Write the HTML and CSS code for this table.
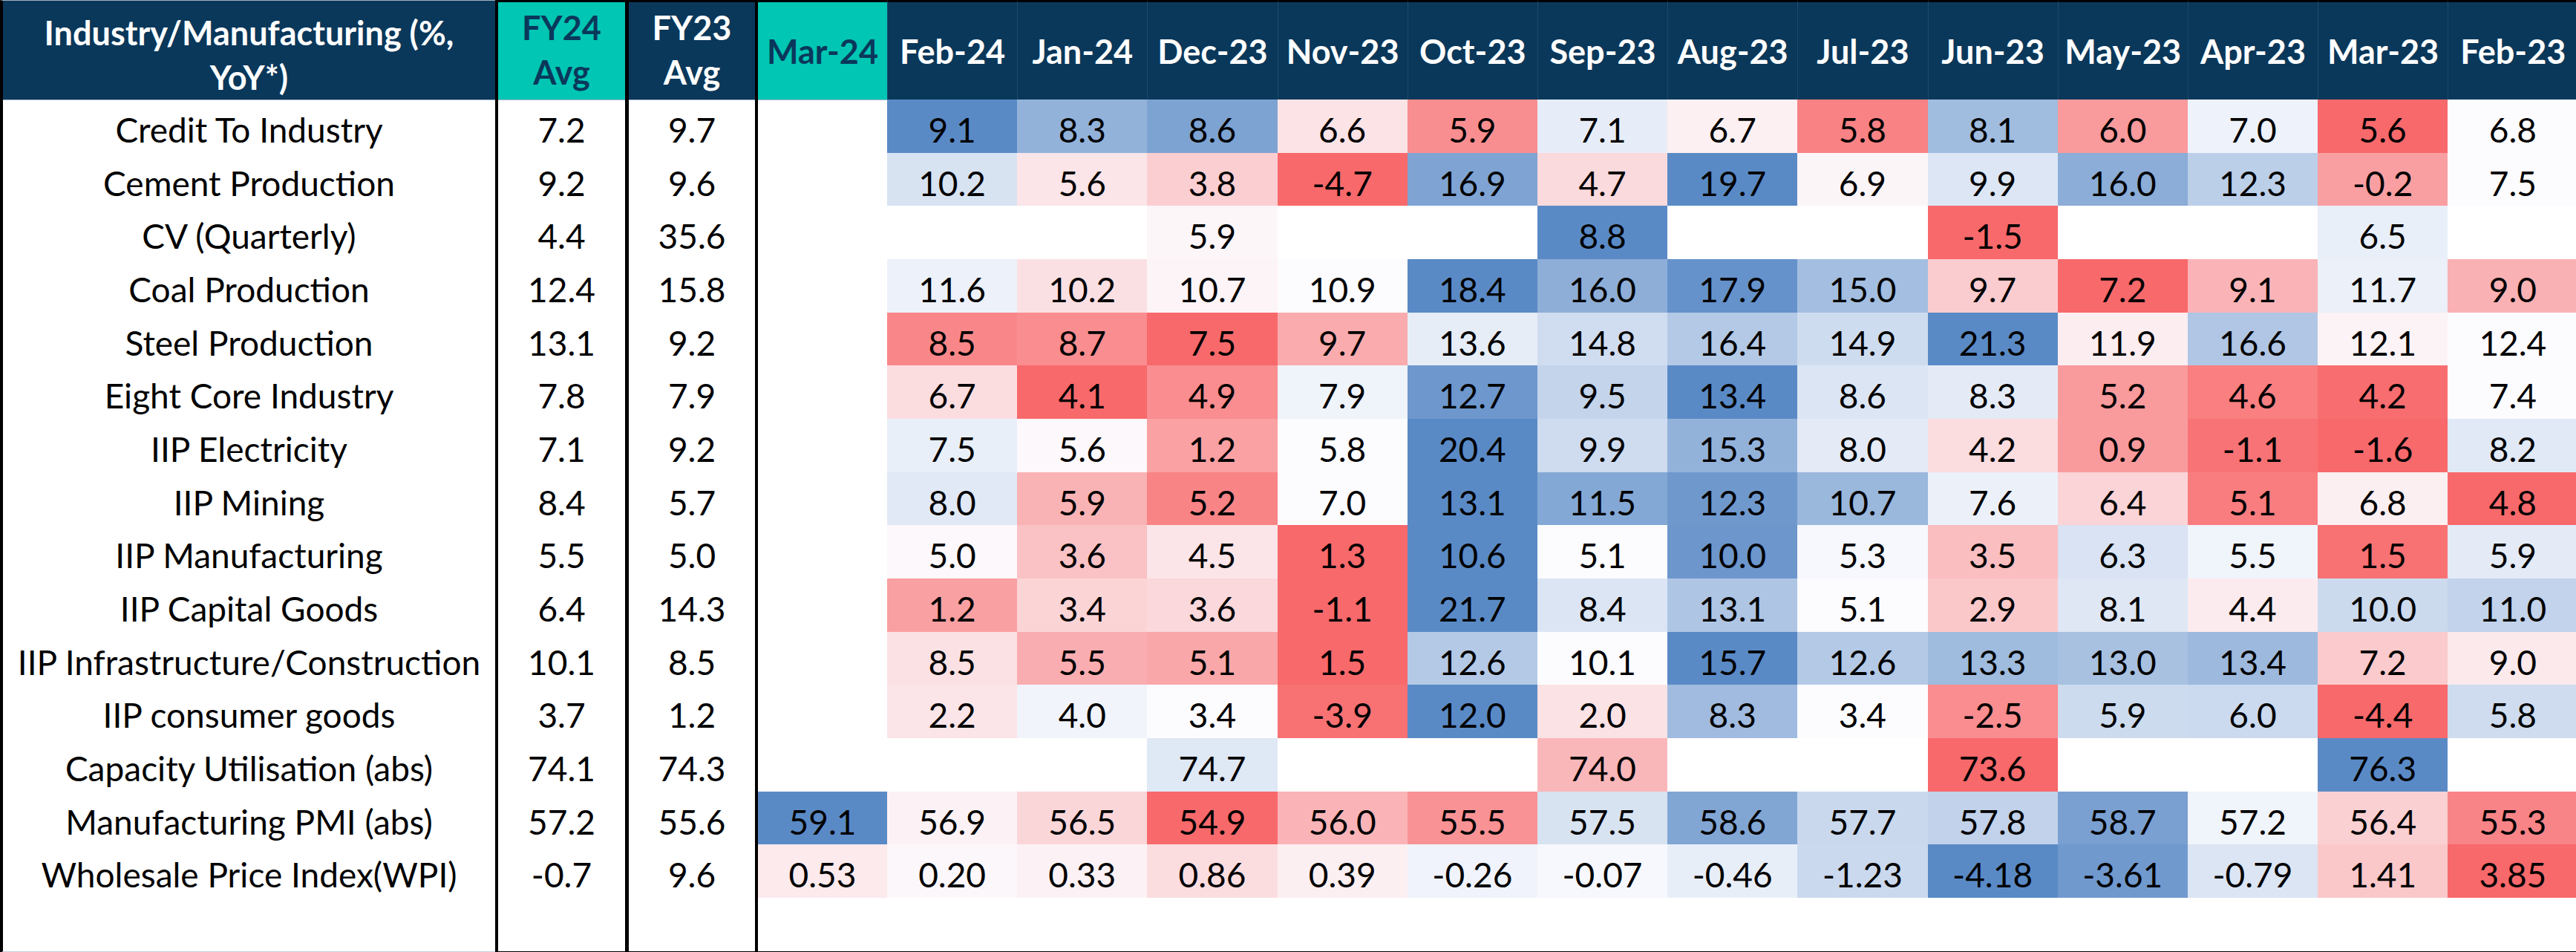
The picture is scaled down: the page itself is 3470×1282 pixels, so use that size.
FILE: index.html
```html
<!DOCTYPE html>
<html lang="en">
<head>
<meta charset="utf-8">
<title>Industry/Manufacturing heatmap</title>
<link rel="stylesheet" href="styles.css">
<script src="script.js" defer></script>
</head>
<body>
<div class="sheet">
  <div class="row head">
    <div class="cell c1 h-navy"><span class="h1text">Industry/Manufacturing (%,<br>YoY*)</span></div>
    <div class="cell fy24 h-teal">FY24<br>Avg</div>
    <div class="cell fy23 h-navy">FY23<br>Avg</div>
    <div class="cell m0 h-teal">Mar-24</div>
    <div class="cell m h-navy">Feb-24</div>
    <div class="cell m h-navy">Jan-24</div>
    <div class="cell m h-navy">Dec-23</div>
    <div class="cell m h-navy">Nov-23</div>
    <div class="cell m h-navy">Oct-23</div>
    <div class="cell m h-navy">Sep-23</div>
    <div class="cell m h-navy">Aug-23</div>
    <div class="cell m h-navy">Jul-23</div>
    <div class="cell m h-navy">Jun-23</div>
    <div class="cell m h-navy">May-23</div>
    <div class="cell m h-navy">Apr-23</div>
    <div class="cell m h-navy">Mar-23</div>
    <div class="cell m h-navy">Feb-23</div>
  </div>

  <div class="row data"><div class="cell c1">Credit To Industry</div><div class="cell fy24">7.2</div><div class="cell fy23">9.7</div><div class="cell m0 hv"></div><div class="cell m hv">9.1</div><div class="cell m hv">8.3</div><div class="cell m hv">8.6</div><div class="cell m hv">6.6</div><div class="cell m hv">5.9</div><div class="cell m hv">7.1</div><div class="cell m hv">6.7</div><div class="cell m hv">5.8</div><div class="cell m hv">8.1</div><div class="cell m hv">6.0</div><div class="cell m hv">7.0</div><div class="cell m hv">5.6</div><div class="cell m hv">6.8</div></div>

  <div class="row data"><div class="cell c1">Cement Production</div><div class="cell fy24">9.2</div><div class="cell fy23">9.6</div><div class="cell m0 hv"></div><div class="cell m hv">10.2</div><div class="cell m hv">5.6</div><div class="cell m hv">3.8</div><div class="cell m hv">-4.7</div><div class="cell m hv">16.9</div><div class="cell m hv">4.7</div><div class="cell m hv">19.7</div><div class="cell m hv">6.9</div><div class="cell m hv">9.9</div><div class="cell m hv">16.0</div><div class="cell m hv">12.3</div><div class="cell m hv">-0.2</div><div class="cell m hv">7.5</div></div>

  <div class="row data"><div class="cell c1">CV (Quarterly)</div><div class="cell fy24">4.4</div><div class="cell fy23">35.6</div><div class="cell m0 hv"></div><div class="cell m hv"></div><div class="cell m hv"></div><div class="cell m hv">5.9</div><div class="cell m hv"></div><div class="cell m hv"></div><div class="cell m hv">8.8</div><div class="cell m hv"></div><div class="cell m hv"></div><div class="cell m hv">-1.5</div><div class="cell m hv"></div><div class="cell m hv"></div><div class="cell m hv">6.5</div><div class="cell m hv"></div></div>

  <div class="row data"><div class="cell c1">Coal Production</div><div class="cell fy24">12.4</div><div class="cell fy23">15.8</div><div class="cell m0 hv"></div><div class="cell m hv">11.6</div><div class="cell m hv">10.2</div><div class="cell m hv">10.7</div><div class="cell m hv">10.9</div><div class="cell m hv">18.4</div><div class="cell m hv">16.0</div><div class="cell m hv">17.9</div><div class="cell m hv">15.0</div><div class="cell m hv">9.7</div><div class="cell m hv">7.2</div><div class="cell m hv">9.1</div><div class="cell m hv">11.7</div><div class="cell m hv">9.0</div></div>

  <div class="row data"><div class="cell c1">Steel Production</div><div class="cell fy24">13.1</div><div class="cell fy23">9.2</div><div class="cell m0 hv"></div><div class="cell m hv">8.5</div><div class="cell m hv">8.7</div><div class="cell m hv">7.5</div><div class="cell m hv">9.7</div><div class="cell m hv">13.6</div><div class="cell m hv">14.8</div><div class="cell m hv">16.4</div><div class="cell m hv">14.9</div><div class="cell m hv">21.3</div><div class="cell m hv">11.9</div><div class="cell m hv">16.6</div><div class="cell m hv">12.1</div><div class="cell m hv">12.4</div></div>

  <div class="row data"><div class="cell c1">Eight Core Industry</div><div class="cell fy24">7.8</div><div class="cell fy23">7.9</div><div class="cell m0 hv"></div><div class="cell m hv">6.7</div><div class="cell m hv">4.1</div><div class="cell m hv">4.9</div><div class="cell m hv">7.9</div><div class="cell m hv">12.7</div><div class="cell m hv">9.5</div><div class="cell m hv">13.4</div><div class="cell m hv">8.6</div><div class="cell m hv">8.3</div><div class="cell m hv">5.2</div><div class="cell m hv">4.6</div><div class="cell m hv">4.2</div><div class="cell m hv">7.4</div></div>

  <div class="row data"><div class="cell c1">IIP Electricity</div><div class="cell fy24">7.1</div><div class="cell fy23">9.2</div><div class="cell m0 hv"></div><div class="cell m hv">7.5</div><div class="cell m hv">5.6</div><div class="cell m hv">1.2</div><div class="cell m hv">5.8</div><div class="cell m hv">20.4</div><div class="cell m hv">9.9</div><div class="cell m hv">15.3</div><div class="cell m hv">8.0</div><div class="cell m hv">4.2</div><div class="cell m hv">0.9</div><div class="cell m hv">-1.1</div><div class="cell m hv">-1.6</div><div class="cell m hv">8.2</div></div>

  <div class="row data"><div class="cell c1">IIP Mining</div><div class="cell fy24">8.4</div><div class="cell fy23">5.7</div><div class="cell m0 hv"></div><div class="cell m hv">8.0</div><div class="cell m hv">5.9</div><div class="cell m hv">5.2</div><div class="cell m hv">7.0</div><div class="cell m hv">13.1</div><div class="cell m hv">11.5</div><div class="cell m hv">12.3</div><div class="cell m hv">10.7</div><div class="cell m hv">7.6</div><div class="cell m hv">6.4</div><div class="cell m hv">5.1</div><div class="cell m hv">6.8</div><div class="cell m hv">4.8</div></div>

  <div class="row data"><div class="cell c1">IIP Manufacturing</div><div class="cell fy24">5.5</div><div class="cell fy23">5.0</div><div class="cell m0 hv"></div><div class="cell m hv">5.0</div><div class="cell m hv">3.6</div><div class="cell m hv">4.5</div><div class="cell m hv">1.3</div><div class="cell m hv">10.6</div><div class="cell m hv">5.1</div><div class="cell m hv">10.0</div><div class="cell m hv">5.3</div><div class="cell m hv">3.5</div><div class="cell m hv">6.3</div><div class="cell m hv">5.5</div><div class="cell m hv">1.5</div><div class="cell m hv">5.9</div></div>

  <div class="row data"><div class="cell c1">IIP Capital Goods</div><div class="cell fy24">6.4</div><div class="cell fy23">14.3</div><div class="cell m0 hv"></div><div class="cell m hv">1.2</div><div class="cell m hv">3.4</div><div class="cell m hv">3.6</div><div class="cell m hv">-1.1</div><div class="cell m hv">21.7</div><div class="cell m hv">8.4</div><div class="cell m hv">13.1</div><div class="cell m hv">5.1</div><div class="cell m hv">2.9</div><div class="cell m hv">8.1</div><div class="cell m hv">4.4</div><div class="cell m hv">10.0</div><div class="cell m hv">11.0</div></div>

  <div class="row data"><div class="cell c1">IIP Infrastructure/Construction</div><div class="cell fy24">10.1</div><div class="cell fy23">8.5</div><div class="cell m0 hv"></div><div class="cell m hv">8.5</div><div class="cell m hv">5.5</div><div class="cell m hv">5.1</div><div class="cell m hv">1.5</div><div class="cell m hv">12.6</div><div class="cell m hv">10.1</div><div class="cell m hv">15.7</div><div class="cell m hv">12.6</div><div class="cell m hv">13.3</div><div class="cell m hv">13.0</div><div class="cell m hv">13.4</div><div class="cell m hv">7.2</div><div class="cell m hv">9.0</div></div>

  <div class="row data"><div class="cell c1">IIP consumer goods</div><div class="cell fy24">3.7</div><div class="cell fy23">1.2</div><div class="cell m0 hv"></div><div class="cell m hv">2.2</div><div class="cell m hv">4.0</div><div class="cell m hv">3.4</div><div class="cell m hv">-3.9</div><div class="cell m hv">12.0</div><div class="cell m hv">2.0</div><div class="cell m hv">8.3</div><div class="cell m hv">3.4</div><div class="cell m hv">-2.5</div><div class="cell m hv">5.9</div><div class="cell m hv">6.0</div><div class="cell m hv">-4.4</div><div class="cell m hv">5.8</div></div>

  <div class="row data"><div class="cell c1">Capacity Utilisation (abs)</div><div class="cell fy24">74.1</div><div class="cell fy23">74.3</div><div class="cell m0 hv"></div><div class="cell m hv"></div><div class="cell m hv"></div><div class="cell m hv">74.7</div><div class="cell m hv"></div><div class="cell m hv"></div><div class="cell m hv">74.0</div><div class="cell m hv"></div><div class="cell m hv"></div><div class="cell m hv">73.6</div><div class="cell m hv"></div><div class="cell m hv"></div><div class="cell m hv">76.3</div><div class="cell m hv"></div></div>

  <div class="row data"><div class="cell c1">Manufacturing PMI (abs)</div><div class="cell fy24">57.2</div><div class="cell fy23">55.6</div><div class="cell m0 hv">59.1</div><div class="cell m hv">56.9</div><div class="cell m hv">56.5</div><div class="cell m hv">54.9</div><div class="cell m hv">56.0</div><div class="cell m hv">55.5</div><div class="cell m hv">57.5</div><div class="cell m hv">58.6</div><div class="cell m hv">57.7</div><div class="cell m hv">57.8</div><div class="cell m hv">58.7</div><div class="cell m hv">57.2</div><div class="cell m hv">56.4</div><div class="cell m hv">55.3</div></div>

  <div class="row data" data-reverse="1"><div class="cell c1">Wholesale Price Index(WPI)</div><div class="cell fy24">-0.7</div><div class="cell fy23">9.6</div><div class="cell m0 hv">0.53</div><div class="cell m hv">0.20</div><div class="cell m hv">0.33</div><div class="cell m hv">0.86</div><div class="cell m hv">0.39</div><div class="cell m hv">-0.26</div><div class="cell m hv">-0.07</div><div class="cell m hv">-0.46</div><div class="cell m hv">-1.23</div><div class="cell m hv">-4.18</div><div class="cell m hv">-3.61</div><div class="cell m hv">-0.79</div><div class="cell m hv">1.41</div><div class="cell m hv">3.85</div></div>

  <div class="row data last"><div class="cell c1"></div><div class="cell fy24"></div><div class="cell fy23"></div><div class="cell m0"></div><div class="cell m"></div><div class="cell m"></div><div class="cell m"></div><div class="cell m"></div><div class="cell m"></div><div class="cell m"></div><div class="cell m"></div><div class="cell m"></div><div class="cell m"></div><div class="cell m"></div><div class="cell m"></div><div class="cell m"></div><div class="cell m"></div></div>
</div>
</body>
</html>
```

FILE: styles.css
```css
* { box-sizing: border-box; }
html, body { margin: 0; padding: 0; background: #ffffff; }
body { width: 3470px; height: 1282px; overflow: hidden; font-family: Lato, "Open Sans", "Liberation Sans", sans-serif; color: #000; }

.sheet { width: 3473px; display: flex; flex-direction: column; }

.row {
  display: grid;
  grid-template-columns: 667px 175px 175px 178px repeat(13, 175.2px);
}

.cell {
  display: flex;
  justify-content: center;
  text-align: center;
  white-space: nowrap;
}

.c1 { border-left: 4px solid #000; }
.fy24 { border-left: 4px solid #000; }
.fy23 { border-left: 5px solid #000; }
.m0 { border-left: 4px solid #000; }

/* header */
.head { height: 134px; }
.head .cell {
  align-items: center;
  font-weight: 700;
  font-size: 45px;
  line-height: 60px;
  border-top: 3px solid #000;
  border-bottom: 1px solid #9fb2c5;
}
.head .c1 { border-top: 1px solid #a4b1bf; }
.h1text { display: block; padding-top: 13px; }
.h-navy { background: #0a385b; color: #ffffff; }
.h-teal { background: #00c6b3; color: #0a385b; }
.head .m { border-left: 1px solid #1e4868; }
.head .fy24, .head .fy23 { padding-bottom: 4px; }

/* data rows */
.data { height: 71.67px; }
.data .cell {
  align-items: flex-start;
  font-size: 46px;
  line-height: 60px;
  padding-top: 11px;
}
.last { height: 73.67px; }
.last .cell { border-bottom: 2px solid #000; }
.last .c1 { border-bottom: 2px solid #c6d2de; }
```

FILE: script.js
```javascript
(function () {
  var WHITE = [252, 252, 255];
  var RED = [248, 105, 107];
  var BLUE = [90, 138, 198];

  function mix(a, b, t) {
    return 'rgb(' + [0, 1, 2].map(function (i) {
      return Math.round(a[i] + (b[i] - a[i]) * t);
    }).join(',') + ')';
  }

  document.querySelectorAll('.row.data').forEach(function (row) {
    var cells = Array.prototype.filter.call(row.querySelectorAll('.hv'), function (c) {
      return c.textContent.trim() !== '';
    });
    if (!cells.length) return;
    var vals = cells.map(function (c) { return parseFloat(c.textContent); });
    var sorted = vals.slice().sort(function (a, b) { return a - b; });
    var n = sorted.length;
    var min = sorted[0], max = sorted[n - 1];
    var mid = n % 2 ? sorted[(n - 1) / 2] : (sorted[n / 2 - 1] + sorted[n / 2]) / 2;
    var reverse = row.dataset.reverse === '1';
    var low = reverse ? BLUE : RED;
    var high = reverse ? RED : BLUE;
    cells.forEach(function (c, i) {
      var v = vals[i], col;
      if (v >= mid) {
        col = mix(WHITE, high, max === mid ? 0 : (v - mid) / (max - mid));
      } else {
        col = mix(WHITE, low, mid === min ? 0 : (mid - v) / (mid - min));
      }
      c.style.background = col;
    });
  });
})();
```
